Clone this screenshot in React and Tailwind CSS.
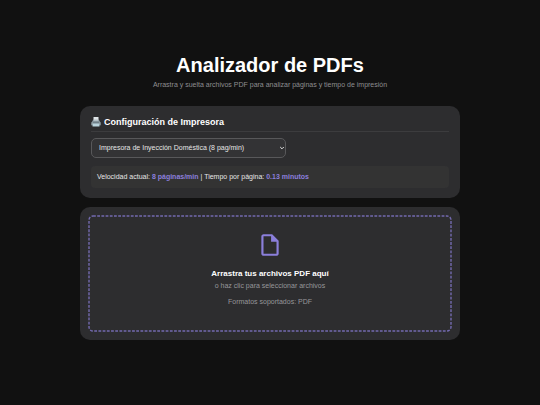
import { useState } from 'react'

const printers = [
  { id: 'inkjet-home', name: 'Impresora de Inyección Doméstica', speed: 8 },
  { id: 'inkjet-office', name: 'Impresora de Inyección Oficina', speed: 15 },
  { id: 'laser-home', name: 'Impresora Láser Doméstica', speed: 20 },
  { id: 'laser-office', name: 'Impresora Láser Oficina', speed: 40 },
]

function PrinterIcon() {
  return (
    <svg viewBox="0 0 20 20" className="size-[10px] shrink-0" aria-hidden="true">
      <path d="M5 0h10v8H5z" fill="#dfe5e8" />
      <path d="M4 6h12l3 5v6H1v-6z" fill="#84949c" />
      <path d="M5 5h10v3H5z" fill="#b4c0c6" />
      <path d="M1 11h18v5H1z" fill="#93a2a9" />
      <path d="M4 11h12v2H4z" fill="#55656e" />
      <path d="M4 13h12l1 6H3z" fill="#b9d3dc" />
    </svg>
  )
}

function FileIcon() {
  return (
    <svg viewBox="0 0 24 24" className="size-[26px]" fill="#8b7fdb" aria-hidden="true">
      <path d="M14 2H6c-1.100 0-1.990.9-1.990 2L4 20c0 1.100.89 2 1.990 2H18c1.100 0 2-.9 2-2V8l-6-6zM6 20V4h7v5h5v11H6z" />
    </svg>
  )
}

// Outline with short dashes, denser than a dashed CSS border
function DashedOutline() {
  return (
    <svg
      className="pointer-events-none absolute inset-px h-[calc(100%-2px)] w-[calc(100%-2px)] overflow-visible"
      aria-hidden="true"
    >
      <rect
        width="100%"
        height="100%"
        rx="4"
        fill="none"
        stroke="#8b7fdb"
        strokeOpacity="0.75"
        strokeWidth="1.4"
        strokeDasharray="2.8 1.4"
      />
    </svg>
  )
}

function PrinterConfig() {
  const [printerId, setPrinterId] = useState('inkjet-home')
  const printer = printers.find((p) => p.id === printerId)

  return (
    <section className="rounded-[10px] bg-[#2d2d2f] px-[11px] pt-[10px] pb-[10px]">
      <h2 className="flex items-center gap-[3px] border-b border-[#3c3c3e] pb-[3px] text-[9px] leading-[12px] font-bold text-white">
        <PrinterIcon />
        <label htmlFor="printer">Configuración de Impresora</label>
      </h2>

      <div className="relative mt-[6px] w-[195px] max-w-full">
        <select
          id="printer"
          value={printerId}
          onChange={(e) => setPrinterId(e.target.value)}
          className="block h-5 w-full appearance-none rounded-[5px] border border-[#58585a] bg-[#333335] px-[7px] text-[7px] text-[#e6e6e6]"
        >
          {printers.map((p) => (
            <option key={p.id} value={p.id}>
              {p.name} ({p.speed} pag/min)
            </option>
          ))}
        </select>
        <svg
          viewBox="0 0 8 8"
          className="pointer-events-none absolute top-[6px] right-0 size-2"
          fill="none"
          stroke="#e6e6e6"
          strokeWidth="1"
          aria-hidden="true"
        >
          <path d="M2.200 3l1.800 1.800L5.800 3" />
        </svg>
      </div>

      <p className="mt-2 rounded-[4px] bg-[#333333] px-[6px] py-[6px] text-[7px] leading-[10px] text-[#e6e6e6]">
        Velocidad actual: <strong className="text-[#8b7fdb]">{printer.speed} páginas/min</strong> | Tiempo por
        página: <strong className="text-[#8b7fdb]">{(1 / printer.speed).toFixed(2)} minutos</strong>
      </p>
    </section>
  )
}

function DropZone() {
  return (
    <section className="mt-[9px] rounded-[10px] bg-[#2d2d2f] p-2">
      <label className="relative flex cursor-pointer flex-col items-center pt-[17px] pb-6 text-center">
        <DashedOutline />
        <input type="file" accept="application/pdf" multiple className="sr-only" />
        <FileIcon />
        <span className="mt-[10px] text-[8px] leading-[12px] font-bold text-white">Arrastra tus archivos PDF aquí</span>
        <span className="text-[7px] leading-[12px] text-[#97979a]">o haz clic para seleccionar archivos</span>
        <span className="mt-1 text-[7px] leading-[12px] text-[#97979a]">Formatos soportados: PDF</span>
      </label>
    </section>
  )
}

export default function App() {
  return (
    <main className="min-h-screen bg-[#111111] px-20 pt-[52px] pb-8 font-['Liberation_Sans',Arial,sans-serif]">
      <header className="mb-4 text-center">
        <h1 className="text-[20px] leading-[26px] font-bold text-white">Analizador de PDFs</h1>
        <p className="mt-[2px] text-[7px] leading-[10px] text-[#8e8e90]">
          Arrastra y suelta archivos PDF para analizar páginas y tiempo de impresión
        </p>
      </header>
      <PrinterConfig />
      <DropZone />
    </main>
  )
}
